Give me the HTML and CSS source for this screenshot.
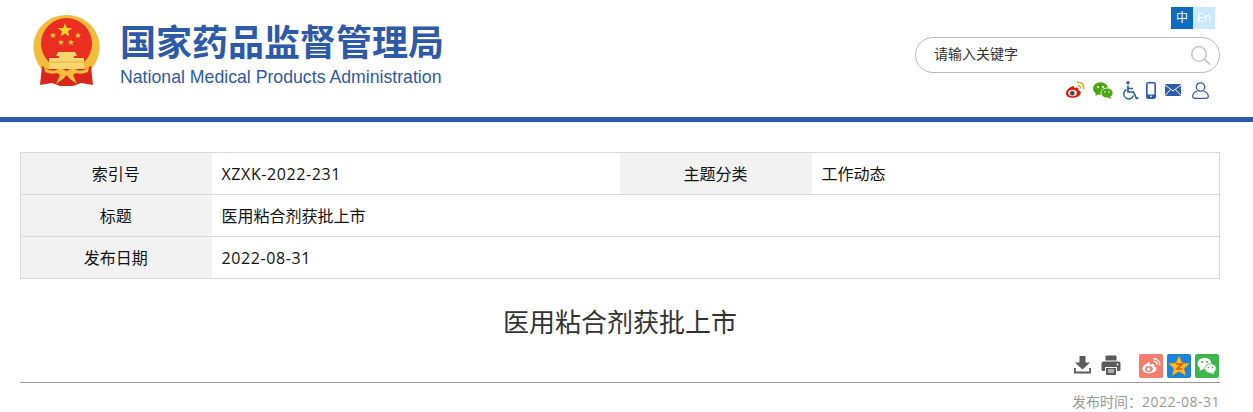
FILE: index.html
```html
<!DOCTYPE html>
<html lang="zh-CN">
<head>
    <meta charset="UTF-8">
    <title>医用粘合剂获批上市</title>
    <link rel="stylesheet" href="styles.css">
</head>
<body>
    <div class="header">
        <div class="logo">
            <svg class="emblem" width="68" height="72" viewBox="0 0 68 72">
                <defs>
                    <polygon id="star" points="0,-10 2.350,-3.200 9.500,-3.100 3.800,1.200 5.900,8.100 0,4 -5.900,8.100 -3.800,1.200 -9.500,-3.100 -2.350,-3.200" fill="#f8d82a"/>
                </defs>
                <path d="M33.500 0 C52 0 66.500 14 66.500 32 C66.500 42 62 50 57 56 L10 56 C5 50 .5 42 .5 32 C.5 14 15 0 33.500 0Z" fill="#f1bd3a"/>
                <circle cx="33.500" cy="28.500" r="25.500" fill="#ea2e22"/>
                <use href="#star" transform="translate(32 15.500) scale(.75)"/>
                <use href="#star" transform="translate(20 20.500) scale(.33)"/>
                <use href="#star" transform="translate(45 20.500) scale(.33)"/>
                <use href="#star" transform="translate(28 27.500) scale(.33)"/>
                <use href="#star" transform="translate(38 27.500) scale(.33)"/>
                <path d="M25 37 H42 L44 41 H41 V43 H51 V54 H16 V43 H26 V41 H23Z" fill="#f7d76e"/>
                <path d="M16 47 H51" stroke="#eeb23a" stroke-width="1"/>
                <path d="M9 51 L15 54 H52 L58 51 L60 70 L48 68 L40 71 H27 L19 68 L7 70Z" fill="#d8261c"/>
                <path d="M11 52 Q17 57 23 55 Q28 52 33.500 56 Q39 52 44 55 Q50 57 56 52 L55 57 Q48 60 43 58 L40 60 L44 69 L37 64 L33.500 60 L30 64 L23 69 L27 60 L24 58 Q19 60 12 57Z" fill="#f1bd3a"/>
            </svg>
            <div class="logo-text">
                <div class="logo-cn">国家药品监督管理局</div>
                <div class="logo-en">National Medical Products Administration</div>
            </div>
        </div>
        <div class="tools">
            <div class="lang">
                <span class="lang-item active">中</span>
                <span class="lang-item">En</span>
            </div>
            <div class="search">
                <span class="search-text">请输入关键字</span>
                <svg width="20" height="19" viewBox="0 0 20 19" fill="none" stroke="#bdbdbd" stroke-width="1.300">
                    <circle cx="8" cy="8" r="7.300"/>
                    <path d="M13.300 13 L19 18.500" stroke-width="1.600"/>
                </svg>
            </div>
            <div class="links">
                <svg width="20" height="18" viewBox="0 0 20 18">
                    <path d="M8 5 C3.500 6.500 .5 10 1 13 C1.500 16 5 17 8.500 16.800 C13 16.500 16 14 15.800 11.500 C15.700 10 14.200 9.500 13.300 9.200 C14 7.500 13 6.500 11.500 6.600 C10.500 6.700 9.500 7 9 7.300 C9.400 5.500 9 4.700 8 5Z" fill="#d81e06"/>
                    <ellipse cx="7.500" cy="12" rx="4.300" ry="3.300" fill="#e8e4e0"/>
                    <circle cx="7.300" cy="12.200" r="2.200" fill="#444"/>
                    <path d="M12 1.500 C16 .5 19.500 3.500 18.500 8" fill="none" stroke="#f0a818" stroke-width="1.600"/>
                    <path d="M12.500 4.700 C14.500 4.200 16 5.500 15.500 7.500" fill="none" stroke="#f0a818" stroke-width="1.300"/>
                </svg>
                <svg class="link-wx" width="20" height="17" viewBox="0 0 20 17">
                    <ellipse cx="7.500" cy="6.500" rx="7.500" ry="6.300" fill="#4da60f"/>
                    <path d="M3 10 L2.500 14 L7 11Z" fill="#4da60f"/>
                    <ellipse cx="14" cy="11" rx="6" ry="5" fill="#4da60f" stroke="#fff" stroke-width=".8"/>
                    <path d="M17 14 L18 17 L14 15Z" fill="#4da60f"/>
                    <circle cx="5" cy="5" r="1" fill="#fff"/>
                    <circle cx="10" cy="5" r="1" fill="#fff"/>
                    <circle cx="12" cy="10" r=".8" fill="#fff"/>
                    <circle cx="16" cy="10" r=".8" fill="#fff"/>
                </svg>
                <svg class="link-access" width="17" height="19" viewBox="0 0 17 19" fill="none" stroke="#2d5cab">
                    <circle cx="6" cy="1.700" r="1.700" fill="#2d5cab" stroke="none"/>
                    <path d="M6 4.500 V11 H11.500 L14.500 17.500 L16.500 16.800" stroke-width="1.700"/>
                    <path d="M6 7.500 H11" stroke-width="1.500"/>
                    <path d="M4.500 8.500 A5 5 0 1 0 11.500 14.500" stroke-width="1.400"/>
                </svg>
                <svg class="link-phone" width="10" height="17" viewBox="0 0 10 17">
                    <rect x=".8" y=".8" width="8.400" height="15.400" rx="1.500" fill="none" stroke="#2d5cab" stroke-width="1.600"/>
                    <rect x="1" y="12.500" width="8" height="3.500" fill="#2d5cab"/>
                    <circle cx="5" cy="14.300" r=".9" fill="#fff"/>
                </svg>
                <svg class="link-mail" width="16" height="12" viewBox="0 0 16 12">
                    <rect width="16" height="12" rx="1" fill="#2d5cab"/>
                    <path d="M0 1 L8 7 L16 1 M0 11.500 L5.500 5.500 M16 11.500 L10.500 5.500" fill="none" stroke="#fff" stroke-width="1"/>
                </svg>
                <svg class="link-user" width="17" height="17" viewBox="0 0 17 17" fill="none" stroke="#2d5cab" stroke-width="1.300">
                    <circle cx="8.500" cy="5" r="4.200"/>
                    <path d="M5.500 9 C2.500 10 .7 12.500 .7 14.500 C.7 15.700 1.500 16.300 2.500 16.300 H14.500 C15.500 16.300 16.300 15.700 16.300 14.500 C16.300 12.500 14.500 10 11.500 9"/>
                </svg>
            </div>
        </div>
    </div>

    <div class="main">
        <table class="info">
            <tr>
                <td class="label first">索引号</td>
                <td class="value first latin">XZXK-2022-231</td>
                <td class="label second">主题分类</td>
                <td class="value second">工作动态</td>
            </tr>
            <tr>
                <td class="label">标题</td>
                <td class="value" colspan="3">医用粘合剂获批上市</td>
            </tr>
            <tr>
                <td class="label">发布日期</td>
                <td class="value latin" colspan="3">2022-08-31</td>
            </tr>
        </table>

        <h1 class="title">医用粘合剂获批上市</h1>

        <div class="actions">
            <svg width="19" height="19" viewBox="0 0 19 19" fill="#5a5a5a">
                <path d="M6.500 1 H12.500 V7.500 H17 L9.500 14.500 L2 7.500 H6.500Z"/>
                <path d="M1 13 H2.800 V16.500 H16.200 V13 H18 V18.500 H1Z"/>
            </svg>
            <svg class="print" width="20" height="20" viewBox="0 0 20 20" fill="#5a5a5a">
                <path d="M4.500 1.500 A1 1 0 0 1 5.500 .5 H14.500 A1 1 0 0 1 15.500 1.500 V5.500 H4.500Z"/>
                <path d="M2.500 6.500 H17.500 A2 2 0 0 1 19.500 8.500 V14.500 A1.500 1.500 0 0 1 18 16 H16 V12 H4 V16 H2 A1.500 1.500 0 0 1 .5 14.500 V8.500 A2 2 0 0 1 2.500 6.500Z"/>
                <path d="M5 13 H15 V19 A1 1 0 0 1 14 20 H6 A1 1 0 0 1 5 19Z"/>
                <path d="M7 15 H13 M7 17 H13" stroke="#fff" stroke-width="1"/>
                <circle cx="16.500" cy="9.500" r="1" fill="#fff"/>
            </svg>
            <svg class="share first" width="24" height="24" viewBox="0 0 24 24">
                <rect width="24" height="24" rx="2" fill="#f67d6b"/>
                <path d="M9.500 8.500 C5.500 10 3 13 3.500 15.500 C4 18 7 19.500 10.500 19.200 C14.500 19 17.500 16.800 17.500 14.500 C17.500 13 16 12.500 15.200 12.200 C15.800 10.500 15 9.800 13.500 10 C12.500 10.100 11.500 10.500 11 10.700 C11.400 9 10.800 8 9.500 8.500Z" fill="#fff"/>
                <ellipse cx="9.800" cy="15" rx="4" ry="3" fill="#f67d6b"/>
                <circle cx="9.500" cy="15.200" r="1.800" fill="#fff"/>
                <path d="M14 5 C18 4 21.500 7.500 20.500 11.500 M14.500 7.500 C16.500 7 18.500 9 18 11" fill="none" stroke="#fff" stroke-width="1.400"/>
            </svg>
            <svg class="share" width="24" height="24" viewBox="0 0 24 24">
                <rect width="24" height="24" rx="2" fill="#1a84dc"/>
                <polygon points="12,2 15,9 22.500,9.500 17,14.500 19,21.500 12,17.500 5,21.500 7,14.500 1.500,9.500 9,9" fill="#f8c11c" stroke="#d98a10" stroke-width=".6"/>
                <path d="M9 10 H15 L10 15 H15.500" fill="none" stroke="#e2501c" stroke-width="1.600"/>
            </svg>
            <svg class="share" width="24" height="24" viewBox="0 0 24 24">
                <rect width="24" height="24" rx="2" fill="#3cb64a"/>
                <ellipse cx="9.500" cy="9.500" rx="7" ry="5.800" fill="#fff"/>
                <path d="M5 13.500 L4.500 17 L8.500 15Z" fill="#fff"/>
                <ellipse cx="15.500" cy="14.500" rx="5.800" ry="4.800" fill="#fff" stroke="#3cb64a" stroke-width=".8"/>
                <path d="M18.500 18 L19.500 20.500 L16 19Z" fill="#fff"/>
                <circle cx="7" cy="8" r="1" fill="#3cb64a"/>
                <circle cx="12" cy="8" r="1" fill="#3cb64a"/>
                <circle cx="13.500" cy="13.500" r=".8" fill="#3cb64a"/>
                <circle cx="17.500" cy="13.500" r=".8" fill="#3cb64a"/>
            </svg>
        </div>

        <div class="publish">发布时间：<span class="date">2022-08-31</span></div>
    </div>
</body>
</html>
```

FILE: styles.css
```css
* { margin: 0; padding: 0; box-sizing: border-box; }
html, body { overflow: hidden; }
body { font-family: "Open Sans", "Noto Sans CJK SC", sans-serif; background: #fff; color: #333; }
.latin { letter-spacing: .6px; }
.date { letter-spacing: .5px; }

.header { height: 122px; border-bottom: 5px solid #2c5aa8; padding: 7px 33px 0 33px; display: flex; justify-content: space-between; }
.logo { display: flex; align-items: flex-start; padding-top: 8px; }
.emblem { display: block; }
.logo-text { margin-left: 19px; color: #2c5aa8; }
.logo-cn { font-family: "Noto Sans CJK SC", sans-serif; font-weight: 700; font-size: 36px; line-height: 40px; margin-top: 5px; white-space: nowrap; }
.logo-en { font-family: "Liberation Sans", sans-serif; font-size: 17.700px; line-height: 20px; margin-top: 7px; white-space: nowrap; }

.tools { width: 305px; display: flex; flex-direction: column; align-items: flex-end; }
.lang { display: flex; margin-right: 5px; }
.lang-item { width: 22px; height: 22px; background: #cce8ff; color: #fff; font-size: 12px; line-height: 22px; text-align: center; }
.lang-item.active { background: #0a6dbd; }
.search { width: 305px; height: 36px; margin-top: 8px; border: 1px solid #b9b9b9; border-radius: 18px; padding: 0 8px 0 18px; display: flex; justify-content: space-between; align-items: center; }
.search-text { font-size: 14px; line-height: 20px; margin-top: -2px; color: #333; }
.links { display: flex; align-items: center; margin-top: 7px; margin-right: 11px; height: 20px; }
.link-wx { margin-left: 8px; }
.link-access { margin-left: 9px; }
.link-phone { margin-left: 7px; }
.link-mail { margin-left: 9px; }
.link-user { margin-left: 11px; }

.main { padding: 30px 33px 0 20px; }
.info { width: 1199px; border-collapse: collapse; table-layout: fixed; font-size: 16px; color: #111; }
.info td { height: 42px; border: 1px solid #d9d9d9; padding-bottom: 2px; }
.info td.latin { padding-bottom: 0; }
.label { background: #f2f2f2; text-align: center; }
.label.first { width: 191px; }
.value.first { width: 408px; }
.label.second { width: 192px; }
.value.second { width: 408px; }
.value { padding-left: 10px; }
.info td.label { border-left: 0; border-right: 0; }
.info tr td:first-child { border-left: 1px solid #d9d9d9; padding-right: 1px; }
.info td.value { border-left: 0; border-right: 0; }
.info tr td:last-child { border-right: 1px solid #d9d9d9; }

.title { font-size: 26px; font-weight: 400; color: #333; text-align: center; width: 1200px; line-height: 36px; margin-top: 25px; }
.actions { width: 1200px; height: 28px; margin-top: 15px; border-bottom: 1px solid #999; display: flex; justify-content: flex-end; align-items: flex-start; padding-right: 1px; }
.actions svg { display: block; }
.print { margin-left: 9px; }
.share { margin-left: 4px; margin-top: -1px; }
.share.first { margin-left: 18px; }
.publish { width: 1200px; margin-top: 9px; text-align: right; font-size: 14px; line-height: 20px; color: #999; }
```
